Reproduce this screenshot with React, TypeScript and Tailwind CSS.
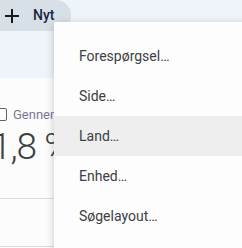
import React from 'react';

const items = ['Forespørgsel…', 'Side…', 'Land…', 'Enhed…', 'Søgelayout…'];

export default function App() {
  return (
    <div className="relative w-[242px] h-[248px] overflow-hidden bg-[#fcfcfc] font-['Roboto',sans-serif]">
      {/* top band */}
      <div className="h-[78px] bg-[#eff3fa]">
        <div className="flex items-center h-[31px] w-[71px] rounded-br-[16px] rounded-tr-[16px] bg-[#d8e0e7] pl-[5px]">
          <svg width="14" height="14" viewBox="0 0 14 14">
            <path d="M7 0v14M0 7h14" stroke="#1b1b1f" strokeWidth="2" />
          </svg>
          <span className="ml-[14px] text-[14px] font-medium text-[#1a2640]">Nyt</span>
        </div>
      </div>

      {/* card content */}
      <div className="flex items-center gap-[6px] mt-[27px] -ml-[6px]">
        <div className="w-[13px] h-[13px] rounded-[2px] border-[1.5px] border-[#5f6368]" />
        <span className="text-[13px] text-[#777a96]">Gennemsnit</span>
      </div>
      <div className="-ml-[9px] mt-[2px] whitespace-nowrap text-[37px] leading-[40px] tracking-[-1px] font-light text-[#3c4043]">1,8 %</div>
      <div className="mt-[31px] h-px bg-[#dadce0]" />
      <div className="mt-[47px] h-px bg-[#dadce0]" />

      {/* dropdown menu */}
      <div className="absolute left-[54px] top-[22px] w-[200px] h-[240px] bg-[#fdfdfd] pt-[14px] shadow-[0_2px_8px_rgba(0,0,0,0.22)]">
        {items.map((label) => (
          <div
            key={label}
            className={`flex items-center h-[40px] pl-[25px] text-[14px] text-[#3c4043] ${label === 'Land…' ? 'bg-[#eeeeee]' : ''}`}
          >
            {label}
          </div>
        ))}
      </div>
    </div>
  );
}
